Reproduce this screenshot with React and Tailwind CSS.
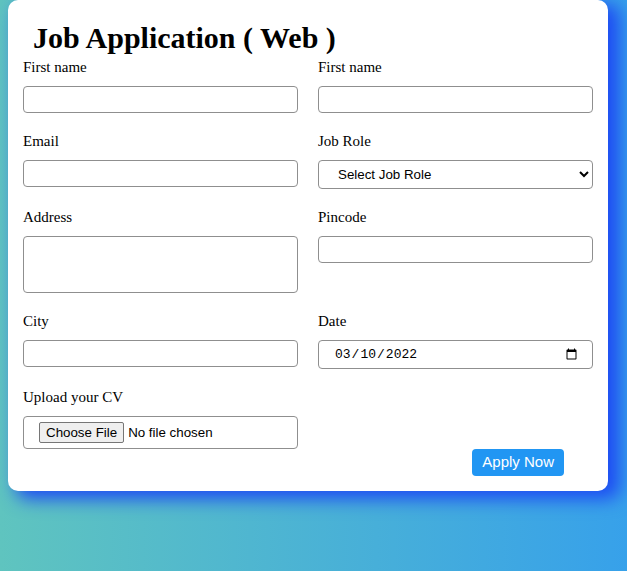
import React from 'react';

const serif = "font-['Liberation_Serif','Times_New_Roman',serif]";
const sans = "font-['Liberation_Sans',Arial,sans-serif]";

const inputBase = 'block w-full border border-[#8f8f8f] rounded-[4px] bg-white text-black outline-none';

const Field = ({ label, children }) => (
  <div className="flex flex-col">
    <label className={`${serif} text-[15px] leading-[18px] text-black`}>{label}</label>
    <div className="mt-[10px]">{children}</div>
  </div>
);

const App = () => {
  return (
    <div className="min-h-screen bg-[linear-gradient(to_right,#5fc4bf,#37a1ea)] pl-[8px] pb-[80px]">
      <div className={`w-[600px] bg-white rounded-[10px] shadow-[10px_6px_18px_2px_#1e4cf3] pt-[15px] px-[15px] pb-[15px] ${serif}`}>
        <h1 className={`${serif} pl-[10px] h-[43px] text-[30px] leading-[45px] font-bold text-black`}>
          Job Application ( Web )
        </h1>

        <form className="grid grid-cols-[275px_275px] gap-x-[20px] gap-y-[19px]" onSubmit={e => e.preventDefault()}>
          <Field label="First name">
            <input type="text" className={`${inputBase} h-[27px] px-[6px] ${sans} text-[13px]`} />
          </Field>
          <Field label="First name">
            <input type="text" className={`${inputBase} h-[27px] px-[6px] ${sans} text-[13px]`} />
          </Field>

          <Field label="Email">
            <input type="email" className={`${inputBase} h-[27px] px-[6px] ${sans} text-[13px]`} />
          </Field>
          <Field label="Job Role">
            <select defaultValue="" className={`${inputBase} h-[29px] pl-[15px] pr-[6px] ${sans} text-[13.33px]`}>
              <option value="">Select Job Role</option>
              <option value="frontend">Frontend Developer</option>
              <option value="backend">Backend Developer</option>
              <option value="fullstack">Full Stack Developer</option>
            </select>
          </Field>

          <Field label="Address">
            <textarea className={`${inputBase} h-[57px] resize-none p-[6px] ${sans} text-[13px]`} />
          </Field>
          <Field label="Pincode">
            <input type="text" className={`${inputBase} h-[27px] px-[6px] ${sans} text-[13px]`} />
          </Field>

          <Field label="City">
            <input type="text" className={`${inputBase} h-[27px] px-[6px] ${sans} text-[13px]`} />
          </Field>
          <Field label="Date">
            <input
              type="date"
              defaultValue="2022-03-10"
              className={`${inputBase} h-[29px] pl-[15px] pr-[12px] font-['Liberation_Mono',monospace] text-[13px]`}
            />
          </Field>

          <Field label="Upload your CV">
            <input
              type="file"
              className={`${inputBase} h-[33px] pl-[15px] pt-[5px] ${sans} text-[13.33px] file:mr-[4px] file:h-[21px] file:px-[6px] file:border file:border-[#767676] file:rounded-[2px] file:bg-[#efefef] file:text-black`}
            />
          </Field>
        </form>

        <div className="flex justify-end pr-[29px]">
          <button
            type="submit"
            className={`h-[27px] px-[10px] rounded-[4px] bg-[#2196f3] text-white text-[15px] ${sans}`}
          >
            Apply Now
          </button>
        </div>
      </div>
    </div>
  );
};

export default App;
